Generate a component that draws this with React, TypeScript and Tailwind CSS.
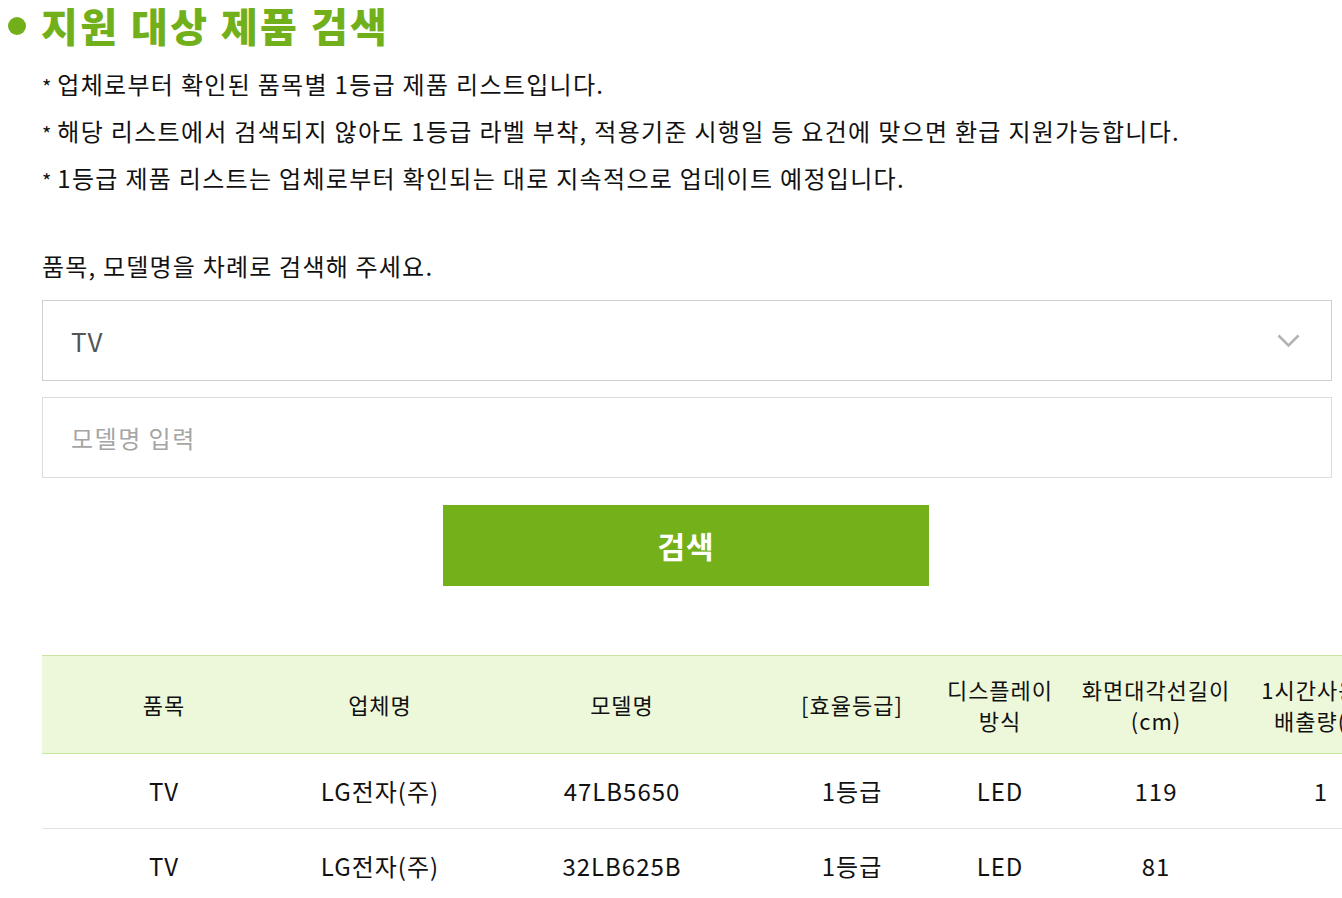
const FONT = { fontFamily: '"Noto Sans CJK KR", "Noto Sans", sans-serif' }

const NOTES = [
  '업체로부터 확인된 품목별 1등급 제품 리스트입니다.',
  '해당 리스트에서 검색되지 않아도 1등급 라벨 부착, 적용기준 시행일 등 요건에 맞으면 환급 지원가능합니다.',
  '1등급 제품 리스트는 업체로부터 확인되는 대로 지속적으로 업데이트 예정입니다.',
]

const COLS = [
  { label: ['품목'], w: 'w-[244px]' },
  { label: ['업체명'], w: 'w-[188px]' },
  { label: ['모델명'], w: 'w-[296px]' },
  { label: ['[효율등급]'], w: 'w-[164px]' },
  { label: ['디스플레이', '방식'], w: 'w-[132px]' },
  { label: ['화면대각선길이', '(cm)'], w: 'w-[180px]' },
  { label: ['1시간사용시', '배출량(g)'], w: 'w-[150px]' },
]

const ROWS = [
  ['TV', 'LG전자(주)', '47LB5650', '1등급', 'LED', '119', '1'],
  ['TV', 'LG전자(주)', '32LB625B', '1등급', 'LED', '81', ''],
]

export default function App() {
  return (
    <div className="w-[1342px] h-[898px] overflow-hidden bg-white text-[#111]" style={FONT}>
      {/* Title */}
      <div className="flex items-center h-[50px] pl-[8px] gap-[15px]">
        <span className="w-[18px] h-[18px] rounded-full bg-[#72b01b] mt-[2px]" />
        <h2 className="text-[40px] font-black text-[#72b01b] tracking-[2.4px] leading-[56px] whitespace-nowrap">지원 대상 제품 검색</h2>
      </div>

      <div className="pl-[42px] w-[1332px]">
        {/* Notes */}
        <ul className="mt-[19px] flex flex-col gap-[17px]">
          {NOTES.map(n => (
            <li key={n} className="flex items-center h-[30px] text-[24px] tracking-[1.3px] leading-none">
              <span className="text-[20px] mr-[6px] mt-[6px] tracking-normal">*</span>
              {n}
            </li>
          ))}
        </ul>

        <p className="mt-[58px] text-[24px] tracking-[1.2px] leading-[30px]">품목, 모델명을 차례로 검색해 주세요.</p>

        {/* Search form */}
        <div className="mt-[19px] flex flex-col gap-[16px]">
          <div className="h-[81px] border border-[#cfcfcf] flex items-center justify-between pl-[28px] pr-[31px]">
            <span className="text-[26px] text-[#555] tracking-[1px]">TV</span>
            <svg width="23" height="14" viewBox="0 0 23 14" className="mt-[1px]">
              <polyline points="1.5,1.5 11.5,11.5 21.5,1.5" fill="none" stroke="#b3b3b3" strokeWidth="2.6" />
            </svg>
          </div>
          <div className="h-[81px] border border-[#dcdcdc] flex items-center pl-[28px]">
            <span className="text-[24px] text-[#a5a5a5] tracking-[1.5px]">모델명 입력</span>
          </div>
        </div>

        <div className="mt-[27px] flex justify-center">
          <button className="w-[486px] h-[81px] bg-[#73b01a] text-white text-[30px] font-bold tracking-[1px] ml-[-2px]">검색</button>
        </div>

        {/* Result table */}
        <div className="mt-[69px] w-[1400px]">
          <div className="flex h-[99px] bg-[#edf8db] border-y border-[#c8e6a0]">
            {COLS.map(c => (
              <div key={c.label.join()} className={`${c.w} shrink-0 flex flex-col items-center justify-center text-[22px] leading-[31px] tracking-[1px]`}>
                {c.label.map(l => (
                  <span key={l} className="whitespace-nowrap">{l}</span>
                ))}
              </div>
            ))}
          </div>
          {ROWS.map((r, i) => (
            <div key={i} className="flex h-[75px] border-b border-[#e2e2e2]">
              {r.map((v, j) => (
                <div key={j} className={`${COLS[j].w} shrink-0 flex items-center justify-center text-[24px] tracking-[1px]`}>
                  {v}
                </div>
              ))}
            </div>
          ))}
        </div>
      </div>
    </div>
  )
}
